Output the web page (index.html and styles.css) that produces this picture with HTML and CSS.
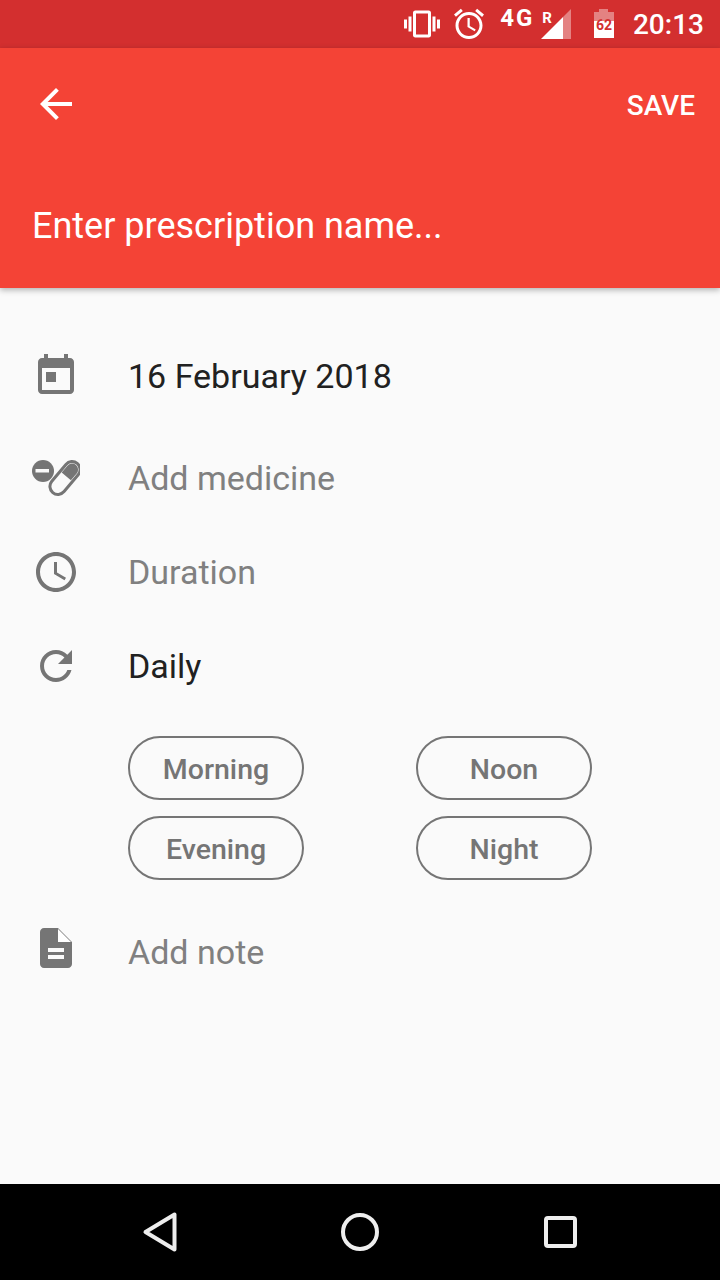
FILE: index.html
```html
<!DOCTYPE html>
<html>
<head>
  <meta charset="UTF-8">
  <title>Add prescription</title>
  <link rel="stylesheet" href="styles.css">
</head>
<body>
  <div class="screen">
    <div class="status-bar">
      <svg class="status-icon vibrate" viewBox="0 0 24 24"><path d="M0 15h2V9H0v6zm3 2h2V7H3v10zm19-8v6h2V9h-2zm-3 8h2V7h-2v10zM16.5 3h-9C6.67 3 6 3.67 6 4.5v15c0 .83.67 1.5 1.5 1.5h9c.83 0 1.5-.67 1.5-1.5v-15c0-.83-.67-1.5-1.5-1.5zM16 19H8V5h8v14z"/></svg>
      <svg class="status-icon alarm" viewBox="0 0 24 24"><path d="M22 5.72l-4.6-3.86-1.29 1.53 4.6 3.86L22 5.72zM7.88 3.39L6.6 1.86 2 5.71l1.29 1.53 4.59-3.85zM12.5 8H11v6l4.75 2.85.75-1.23-4-2.37V8zM12 4c-4.97 0-9 4.03-9 9s4.03 9 9 9 9-4.03 9-9-4.03-9-9-9zm0 16c-3.87 0-7-3.13-7-7s3.13-7 7-7 7 3.13 7 7-3.13 7-7 7z"/></svg>
      <span class="net">4G</span>
      <span class="roam">R</span>
      <svg class="signal" viewBox="0 0 30 30"><path class="faint" d="M22 8L30 0V30H22z"/><path d="M0 30L22 8V30z"/></svg>
      <div class="battery">
        <div class="battery-nub"></div>
        <div class="battery-empty"></div>
        <div class="battery-full">62</div>
      </div>
      <span class="clock">20:13</span>
    </div>

    <header class="toolbar">
      <div class="toolbar-top">
        <svg class="back" viewBox="0 0 24 24"><path d="M20 11H7.83l5.59-5.59L12 4l-8 8 8 8 1.41-1.41L7.83 13H20v-2z"/></svg>
        <span class="save">SAVE</span>
      </div>
      <div class="name">Enter prescription name...</div>
    </header>

    <main class="content">
      <div class="row row-date">
        <svg class="icon" viewBox="0 0 24 24"><path d="M12 10H7v5h5zM16 1v2H8V1H6v2H5c-1.11 0-1.99.9-1.99 2L3 19c0 1.1.89 2 2 2h14c1.1 0 2-.9 2-2V5c0-1.1-.9-2-2-2h-1V1h-2zm3 18H5V8h14v11z"/></svg>
        <span class="value">16 February 2018</span>
      </div>
      <div class="row">
        <svg class="icon" viewBox="0 0 48 48">
          <circle cx="11" cy="17" r="11"/>
          <rect class="cut" x="3.500" y="15" width="13.500" height="3.500"/>
          <g transform="rotate(-50 33 24)">
            <rect class="pill" x="14" y="16" width="38" height="16" rx="8"/>
            <path d="M35 18h9a6 6 0 0 1 0 12h-9z"/>
          </g>
        </svg>
        <span class="hint">Add medicine</span>
      </div>
      <div class="row">
        <svg class="icon" viewBox="0 0 24 24"><path d="M11.99 2C6.47 2 2 6.48 2 12s4.47 10 9.99 10C17.52 22 22 17.52 22 12S17.52 2 11.99 2zM12 20c-4.42 0-8-3.58-8-8s3.58-8 8-8 8 3.58 8 8-3.58 8-8 8zm.5-13H11v6l5.25 3.15.75-1.23-4.5-2.67z"/></svg>
        <span class="hint">Duration</span>
      </div>
      <div class="row">
        <svg class="icon" viewBox="0 0 24 24"><path d="M17.65 6.35C16.2 4.9 14.21 4 12 4c-4.42 0-7.99 3.58-7.99 8s3.57 8 7.99 8c3.73 0 6.84-2.55 7.73-6h-2.08c-.82 2.33-3.04 4-5.65 4-3.31 0-6-2.69-6-6s2.69-6 6-6c1.66 0 3.14.69 4.22 1.78L13 11h7V4l-2.35 2.35z"/></svg>
        <span class="value">Daily</span>
      </div>

      <div class="chips">
        <div class="chip">Morning</div>
        <div class="chip">Noon</div>
        <div class="chip">Evening</div>
        <div class="chip">Night</div>
      </div>

      <div class="row row-note">
        <svg class="icon icon-note" viewBox="0 0 24 24"><path fill-rule="evenodd" d="M13 2H6c-1.1 0-2 .9-2 2v16c0 1.100.9 2 2 2h12c1.100 0 2-.9 2-2V9zM8 12h8v2H8zm0 3.500h8v2H8z"/><path class="fold" d="M13 2.500V9h6.500z"/></svg>
        <span class="hint">Add note</span>
      </div>
    </main>

    <nav class="nav-bar">
      <svg class="nav-icon" viewBox="0 0 80 48"><path d="M54.500 6.500V41.500L25.500 24z"/></svg>
      <svg class="nav-icon" viewBox="0 0 80 48"><circle cx="40" cy="24" r="17"/></svg>
      <svg class="nav-icon" viewBox="0 0 80 48"><rect x="26" y="10" width="29" height="28" rx="2"/></svg>
    </nav>
  </div>
</body>
</html>
```

FILE: styles.css
```css
/* page */
body {
  margin: 0;
  font-family: Roboto, "Liberation Sans", sans-serif;
  background-color: #fafafa;
}

.screen {
  display: flex;
  flex-direction: column;
  width: 720px;
  height: 1280px;
  overflow: hidden;
}

/* status bar */
.status-bar {
  display: flex;
  align-items: center;
  justify-content: flex-end;
  height: 48px;
  padding-right: 16px;
  background-color: #d32f2f;
  color: #fff;
}

.status-icon {
  width: 36px;
  height: 36px;
  fill: #fff;
}

.alarm {
  margin-left: 11px;
}

.net {
  margin-left: 13px;
  margin-bottom: 13px;
  font-size: 24px;
  font-weight: 700;
  letter-spacing: 2px;
}

.roam {
  margin-left: 8px;
  margin-bottom: 12px;
  font-size: 15px;
  font-weight: 700;
}

.signal {
  width: 30px;
  height: 30px;
  margin-left: -11px;
  fill: #fff;
}

.signal .faint {
  fill: rgba(255, 255, 255, 0.4);
}

.battery {
  display: flex;
  flex-direction: column;
  align-items: center;
  width: 20px;
  height: 29px;
  margin-left: 23px;
  margin-bottom: 1px;
}

.battery-nub {
  width: 9px;
  height: 3px;
  background-color: rgba(255, 255, 255, 0.4);
}

.battery-empty {
  width: 20px;
  height: 9px;
  background-color: rgba(255, 255, 255, 0.4);
}

.battery-full {
  width: 20px;
  height: 17px;
  background-color: #fff;
  color: #d32f2f;
  font-size: 14px;
  font-weight: 700;
  line-height: 8px;
  text-align: center;
}

.clock {
  margin-left: 19px;
  font-size: 28px;
  font-weight: 500;
}

/* red header */
.toolbar {
  position: relative;
  height: 240px;
  background-color: #f44336;
  box-shadow: 0 2px 6px rgba(0, 0, 0, 0.3);
  color: #fff;
}

.toolbar-top {
  display: flex;
  align-items: center;
  justify-content: space-between;
  height: 112px;
  padding: 0 25px 0 32px;
}

.back {
  width: 48px;
  height: 48px;
  fill: #fff;
}

.save {
  margin-top: 2px;
  font-size: 28px;
  font-weight: 500;
}

.name {
  margin-top: 41px;
  padding-left: 32px;
  font-size: 36px;
  line-height: 50px;
}

/* form rows */
.content {
  flex: 1;
  padding-top: 41px;
}

.row {
  display: flex;
  align-items: center;
  gap: 48px;
  height: 94px;
  padding-left: 32px;
  font-size: 34px;
}

.row-date {
  margin-bottom: 8px;
}

.row-note {
  margin-top: 25px;
}

.icon {
  width: 48px;
  height: 48px;
  fill: #757575;
  flex-shrink: 0;
}

.icon-note {
  margin-bottom: 8px;
}

.icon .cut {
  fill: #fafafa;
}

.icon .fold {
  fill: #fff;
}

.icon .pill {
  fill: #fafafa;
  stroke: #757575;
  stroke-width: 3;
}

.value {
  color: #212121;
}

.hint {
  color: #808080;
}

/* time of day chips */
.chips {
  display: grid;
  grid-template-columns: 176px 176px;
  column-gap: 112px;
  row-gap: 16px;
  margin-top: 23px;
  padding-left: 128px;
}

.chip {
  height: 60px;
  border: 2px solid #757575;
  border-radius: 32px;
  color: #757575;
  font-size: 28.500px;
  font-weight: 500;
  line-height: 64px;
  text-align: center;
}

/* navigation bar */
.nav-bar {
  display: flex;
  align-items: center;
  justify-content: space-between;
  height: 96px;
  padding: 0 120px;
  background-color: #000;
}

.nav-icon {
  width: 80px;
  height: 48px;
  fill: none;
  stroke: #eee;
  stroke-width: 4;
  stroke-linejoin: round;
}
```
